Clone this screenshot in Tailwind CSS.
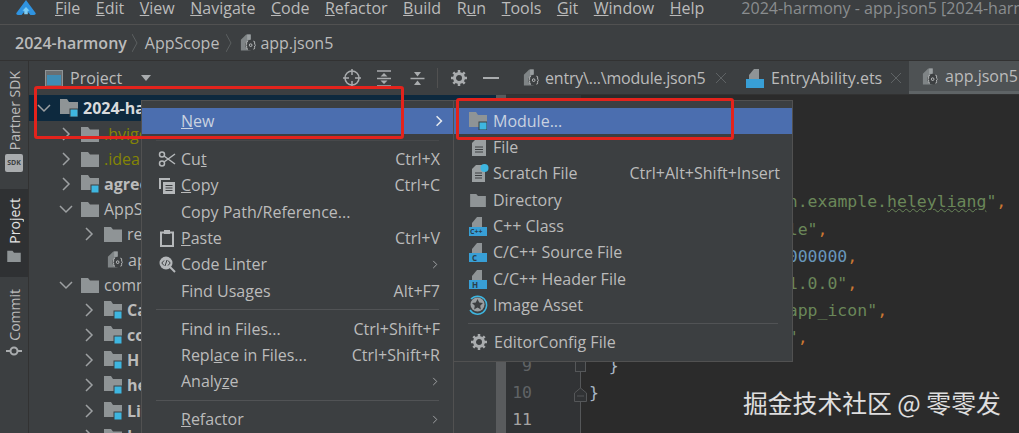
<!DOCTYPE html>
<html lang="en">
  <head>
    <meta charset="UTF-8" />
    <title>2024-harmony - app.json5</title>
    <script src="https://cdn.jsdelivr.net/npm/@tailwindcss/browser@4"></script>
  </head>
  <body class="bg-[#3c3f41]">
    <svg class="hidden">
      <symbol id="folder" viewBox="0 0 18 16"><path d="M0 1h7l2 2.500h9V16H0z" fill="#8f9496"/></symbol>
      <symbol id="module" viewBox="0 0 18 18"><path d="M0 0h7l2 3h9v12H0z" fill="#8f9496"/><rect x="10" y="10" width="8" height="8" fill="#3eb6e0" stroke="#3c3f41"/></symbol>
      <symbol id="json" viewBox="0 0 18 20"><path d="M1 7l6-6h5v18H1z" fill="#7f8486"/><path d="M8 1h4v6H8z" fill="#9a9fa1"/><circle cx="12" cy="13" r="6" fill="#3c3f41"/><path d="M9 8.500q-2 0-1.500 2t-1 2.500q1.500.5 1 2.500t1.500 2M15 8.500q2 0 1.500 2t1 2.500q-1.500.5-1 2.500t-1.500 2" fill="none" stroke="#c5c8c9" stroke-width="1"/><circle cx="12" cy="13" r="1.500" fill="none" stroke="#c5c8c9"/></symbol>
      <symbol id="typed" viewBox="0 0 18 20"><path d="M3 7l5-6h5v10H3z" fill="#8f9496"/><rect y="11" width="18" height="9" fill="#389fd6"/></symbol>
      <symbol id="chev-right" viewBox="0 0 10 14"><path d="M2 1l6 6-6 6" fill="none" stroke="#9da0a2" stroke-width="1.500"/></symbol>
      <symbol id="chev-down" viewBox="0 0 14 10"><path d="M1 2l6 6 6-6" fill="none" stroke="#9da0a2" stroke-width="1.500"/></symbol>
    </svg>

    <div class="relative w-[1019px] h-[433px] overflow-hidden bg-[#3c3f41] text-[#bbbbbb] text-[16px] font-['Open_Sans','Noto_Sans_CJK_SC',sans-serif]">
      <!-- Menu bar -->
      <header class="flex items-center h-[25px] border-b border-[#515151] whitespace-nowrap overflow-hidden leading-[16px]">
        <svg class="w-[22px] h-[16px] shrink-0 ml-[15px] mr-[18px] -mt-[8px]" viewBox="0 0 22 18">
          <path d="M11 0l11 15q0 2-2 2h-4l-5-6-5 6H2q-2 0-2-2z" fill="#2f93e0"/>
          <path d="M11 8l4 4h-2v4H9v-4H7z" fill="#7ccdf5"/>
        </svg>
        <nav class="flex shrink-0 gap-[15.500px] -mt-[8px]">
          <span><u>F</u>ile</span><span><u>E</u>dit</span><span><u>V</u>iew</span><span><u>N</u>avigate</span><span><u>C</u>ode</span><span><u>R</u>efactor</span><span><u>B</u>uild</span><span>R<u>u</u>n</span><span><u>T</u>ools</span><span><u>G</u>it</span><span><u>W</u>indow</span><span><u>H</u>elp</span>
        </nav>
        <span class="ml-[37px] shrink-0 -mt-[8px] text-[#8a8d8f]">2024-harmony - app.json5 [2024-harmony]</span>
      </header>

      <!-- Breadcrumb -->
      <div class="flex items-center h-[36px] pl-[15px] border-b border-[#323232] whitespace-nowrap">
        <b class="font-semibold">2024-harmony</b>
        <svg class="w-[6px] h-[18px] ml-[5px] mr-[7px]" viewBox="0 0 6 18"><path d="M0 0l5 9-5 9" fill="none" stroke="#5c5f61"/></svg>
        <span>AppScope</span>
        <svg class="w-[6px] h-[18px] ml-[7px] mr-[8px]" viewBox="0 0 6 18"><path d="M0 0l5 9-5 9" fill="none" stroke="#5c5f61"/></svg>
        <svg class="w-[16px] h-[19px] mr-[4px]"><use href="#json"/></svg>
        <span>app.json5</span>
      </div>

      <div class="flex h-[372px]">
        <!-- Tool window strip -->
        <aside class="w-[29px] shrink-0 border-r border-[#323232] flex flex-col items-center text-[14px]">
          <div class="flex flex-col items-center pt-[10px] h-[128px]">
            <span class="[writing-mode:vertical-rl] rotate-180">Partner SDK</span>
            <span class="mt-[4px] w-[18px] h-[18px] shrink-0 rounded-[2px] bg-[#a9acae] text-[#3c3f41] text-[7px] font-bold flex items-center justify-center">SDK</span>
          </div>
          <div class="w-full h-[88px] bg-[#2f3133] flex flex-col items-center pt-[9px] text-[#e4e4e4]">
            <span class="[writing-mode:vertical-rl] rotate-180">Project</span>
            <svg class="w-[14px] h-[12px] mt-[6px]"><use href="#folder"/></svg>
          </div>
          <div class="flex flex-col items-center pt-[12px]">
            <span class="[writing-mode:vertical-rl] rotate-180">Commit</span>
            <svg class="w-[16px] h-[12px] mt-[4px]" viewBox="0 0 16 12"><path d="M0 6h16" stroke="#a9acae" stroke-width="2"/><circle cx="8" cy="6" r="3.500" fill="#3c3f41" stroke="#a9acae" stroke-width="2"/></svg>
          </div>
        </aside>

        <!-- Project panel -->
        <section class="w-[477px] shrink-0 flex flex-col">
          <div class="flex items-center h-[34px] shrink-0 pl-[16px] pr-[7px]">
            <svg class="w-[18px] h-[17px]" viewBox="0 0 18 17"><rect x=".5" y=".5" width="17" height="16" fill="#6a6f72" stroke="#8f9496"/><rect x="2" y="5" width="14" height="10" fill="#3f8cb4"/></svg>
            <span class="ml-[7px]">Project</span>
            <svg class="w-[10px] h-[6px] ml-[19px]" viewBox="0 0 10 6"><path d="M0 0h10L5 6z" fill="#a9acae"/></svg>
            <div class="ml-auto flex items-center">
              <svg class="w-[18px] h-[18px]" viewBox="0 0 18 18"><circle cx="9" cy="9" r="7" fill="none" stroke="#a9acae" stroke-width="1.500"/><path d="M9 0v6M9 12v6M0 9h6M12 9h6" stroke="#a9acae" stroke-width="1.500"/></svg>
              <svg class="w-[16px] h-[17px] ml-[15px]" viewBox="0 0 16 17"><path d="M1 1h14M1 16h14M1 8.500h14" stroke="#a9acae" stroke-width="1.500"/><path d="M8 3l3.500 3.500h-7zM8 14l3.500-3.500h-7z" fill="#a9acae"/></svg>
              <svg class="w-[17px] h-[17px] ml-[17px]" viewBox="0 0 16 17"><path d="M1 8.500h14" stroke="#a9acae" stroke-width="1.500"/><path d="M8 6.500L4.500 2h7zM8 10.500l3.500 4.500h-7z" fill="#a9acae"/></svg>
              <span class="w-px h-[20px] ml-[11px] bg-[#515151]"></span>
              <svg class="w-[16px] h-[16px] ml-[13px]" viewBox="0 0 16 16"><circle cx="8" cy="8" r="4.500" fill="none" stroke="#a9acae" stroke-width="3"/><path d="M8 0v3M8 13v3M0 8h3M13 8h3M2.300 2.300l2.100 2.100M11.600 11.600l2.100 2.100M2.300 13.700l2.100-2.100M11.600 4.400l2.100-2.100" stroke="#a9acae" stroke-width="2.500"/></svg>
              <span class="w-[16px] h-[2px] ml-[16px] bg-[#a9acae]"></span>
            </div>
          </div>

          <div class="flex flex-1 min-h-0">
            <!-- Tree -->
            <div class="flex-1 min-w-0 overflow-hidden whitespace-nowrap">
              <div class="flex items-center h-[26px] bg-[#0d293e] pl-[8px] font-bold text-[#d8dadb]">
                <svg class="w-[14px] h-[10px]"><use href="#chev-down"/></svg>
                <svg class="w-[18px] h-[18px] ml-[9px]"><use href="#module"/></svg>
                <span class="ml-[5px]">2024-harmony</span>
              </div>
              <div class="flex items-center h-[25.200px] pl-[32px]"><svg class="w-[10px] h-[14px]"><use href="#chev-right"/></svg><svg class="w-[18px] h-[16px] ml-[10px]"><use href="#folder"/></svg><span class="ml-[5px] text-[#848504]">.hvigor</span></div>
              <div class="flex items-center h-[25.200px] pl-[32px]"><svg class="w-[10px] h-[14px]"><use href="#chev-right"/></svg><svg class="w-[18px] h-[16px] ml-[10px]"><use href="#folder"/></svg><span class="ml-[5px] text-[#848504]">.idea</span></div>
              <div class="flex items-center h-[25.200px] pl-[32px]"><svg class="w-[10px] h-[14px]"><use href="#chev-right"/></svg><svg class="w-[18px] h-[18px] ml-[10px]"><use href="#module"/></svg><b class="ml-[5px]">agree</b></div>
              <div class="flex items-center h-[25.200px] pl-[30px]"><svg class="w-[14px] h-[10px]"><use href="#chev-down"/></svg><svg class="w-[18px] h-[16px] ml-[8px]"><use href="#folder"/></svg><span class="ml-[5px]">AppScope</span></div>
              <div class="flex items-center h-[25.200px] pl-[55px]"><svg class="w-[10px] h-[14px]"><use href="#chev-right"/></svg><svg class="w-[18px] h-[16px] ml-[10px]"><use href="#folder"/></svg><span class="ml-[5px]">resources</span></div>
              <div class="flex items-center h-[25.200px] pl-[78px]"><svg class="w-[16px] h-[19px]"><use href="#json"/></svg><span class="ml-[5px]">app.json5</span></div>
              <div class="flex items-center h-[25.200px] pl-[30px]"><svg class="w-[14px] h-[10px]"><use href="#chev-down"/></svg><svg class="w-[18px] h-[16px] ml-[8px]"><use href="#folder"/></svg><span class="ml-[5px]">commons</span></div>
              <div class="flex items-center h-[25.200px] pl-[55px]"><svg class="w-[10px] h-[14px]"><use href="#chev-right"/></svg><svg class="w-[18px] h-[18px] ml-[10px]"><use href="#module"/></svg><b class="ml-[5px]">Ca</b></div>
              <div class="flex items-center h-[25.200px] pl-[55px]"><svg class="w-[10px] h-[14px]"><use href="#chev-right"/></svg><svg class="w-[18px] h-[18px] ml-[10px]"><use href="#module"/></svg><b class="ml-[5px]">co</b></div>
              <div class="flex items-center h-[25.200px] pl-[55px]"><svg class="w-[10px] h-[14px]"><use href="#chev-right"/></svg><svg class="w-[18px] h-[18px] ml-[10px]"><use href="#module"/></svg><b class="ml-[5px]">H</b></div>
              <div class="flex items-center h-[25.200px] pl-[55px]"><svg class="w-[10px] h-[14px]"><use href="#chev-right"/></svg><svg class="w-[18px] h-[18px] ml-[10px]"><use href="#module"/></svg><b class="ml-[5px]">he</b></div>
              <div class="flex items-center h-[25.200px] pl-[55px]"><svg class="w-[10px] h-[14px]"><use href="#chev-right"/></svg><svg class="w-[18px] h-[18px] ml-[10px]"><use href="#module"/></svg><b class="ml-[5px]">Li</b></div>
              <div class="flex items-center h-[25.200px] pl-[55px]"><svg class="w-[10px] h-[14px]"><use href="#chev-right"/></svg><svg class="w-[18px] h-[16px] ml-[10px]"><use href="#folder"/></svg><b class="ml-[5px]">Le</b></div>
            </div>
            <!-- Panel scrollbar -->
            <div class="w-[10px] shrink-0 bg-[#595b5d]"></div>
          </div>
        </section>

        <!-- Editor -->
        <main class="flex-1 min-w-0 flex flex-col">
          <div class="flex h-[34px] shrink-0 border-b border-[#323232] whitespace-nowrap overflow-hidden">
            <div class="flex items-center w-[232px] pl-[17px] shrink-0">
              <svg class="w-[16px] h-[19px]"><use href="#json"/></svg>
              <span class="ml-[6px] tracking-[-0.2px]">entry\...\module.json5</span>
              <svg class="w-[10px] h-[10px] ml-[10px]" viewBox="0 0 10 10"><path d="M0 0l10 10M10 0L0 10" stroke="#5f6365"/></svg>
            </div>
            <div class="flex items-center w-[171px] pl-[8px] shrink-0">
              <svg class="w-[18px] h-[20px]"><use href="#typed"/></svg>
              <span class="ml-[7px]">EntryAbility.ets</span>
              <svg class="w-[10px] h-[10px] ml-[9px]" viewBox="0 0 10 10"><path d="M0 0l10 10M10 0L0 10" stroke="#5f6365"/></svg>
            </div>
            <div class="flex items-center flex-1 pl-[13px] bg-[#4e5254] border-b-[3px] border-[#5f6466]">
              <svg class="w-[16px] h-[19px]"><use href="#json"/></svg>
              <span class="ml-[7px]">app.json5</span>
            </div>
          </div>
          <div class="flex-1 min-h-0 flex overflow-hidden bg-[#2b2b2b] font-['DejaVu_Sans_Mono',monospace] text-[16.500px] leading-[27.200px]">
            <div class="relative w-[75px] shrink-0 bg-[#313335] pt-[39px] pr-[49px] text-right text-[#606366]">
              <div>1</div>
              <div>2</div>
              <div>3</div>
              <div>4</div>
              <div>5</div>
              <div>6</div>
              <div>7</div>
              <div>8</div>
              <div>9</div>
              <div>10</div>
              <div class="text-[#a4a3a3]">11</div>
              <!-- Fold guide and markers -->
              <span class="absolute right-0 top-[277px] bottom-0 w-px bg-[#555759]"></span>
              <span class="absolute right-[-5px] top-[266px] w-[11px] h-[11px] border border-[#555759] bg-[#313335]"></span>
              <svg class="absolute right-[-6px] top-[292px] w-[13px] h-[15px]" viewBox="0 0 13 15"><path d="M.5 6l6-5 6 5v8.500H.5z" fill="#313335" stroke="#555759"/><path d="M3 9h7" stroke="#555759"/></svg>
            </div>
            <div class="pt-[39px] pl-[8px] text-[#a9b7c6] [&>div]:whitespace-pre">
              <div>{</div>
              <div>  <span class="text-[#9876aa]">"app"</span>: {</div>
              <div>    <span class="text-[#9876aa]">"bundleName"</span>: <span class="text-[#6a8759]">"cn.example.<span class="underline decoration-wavy decoration-[#6a8759] decoration-1">heleyliang</span>"</span><span class="text-[#cc7832]">,</span></div>
              <div>    <span class="text-[#9876aa]">"vendor"</span>: <span class="text-[#6a8759]">"example"</span><span class="text-[#cc7832]">,</span></div>
              <div>    <span class="text-[#9876aa]">"versionCode"</span>: <span class="text-[#6897bb]">1000000</span><span class="text-[#cc7832]">,</span></div>
              <div>    <span class="text-[#9876aa]">"versionName"</span>: <span class="text-[#6a8759]">"1.0.0"</span><span class="text-[#cc7832]">,</span></div>
              <div>    <span class="text-[#9876aa]">"icon"</span>: <span class="text-[#6a8759]">"$media:app_icon"</span><span class="text-[#cc7832]">,</span></div>
              <div>    <span class="text-[#9876aa]">"label"</span>: <span class="text-[#6a8759]">"helley"</span><span class="text-[#cc7832]">,</span></div>
              <div>  }</div>
              <div>}</div>
            </div>
          </div>
        </main>
      </div>

      <!-- New context menu -->
      <div class="absolute left-[141px] top-[100px] w-[313px] h-[340px] pt-[7px] bg-[#3c3f41] border border-[#515151] whitespace-nowrap">
        <div class="flex items-center h-[26px] pl-[39px] pr-[10px] bg-[#4b6eaf] text-[#c9d2e0]"><span><u>N</u>ew</span><svg class="w-[8px] h-[12px] ml-auto" viewBox="0 0 10 14"><path d="M2 1l6 6-6 6" fill="none" stroke="#e4e8ee" stroke-width="2"/></svg></div>
        <div class="h-[12px] flex items-center mx-[14px]"><span class="w-full h-px bg-[#47494b]"></span></div>
        <div class="flex items-center h-[26.300px] pr-[13px]">
          <svg class="w-[18px] h-[18px] ml-[16px] mr-[5px]" viewBox="0 0 18 18"><circle cx="4" cy="4.500" r="2.500" fill="none" stroke="#b5b8ba" stroke-width="1.500"/><circle cx="4" cy="13.500" r="2.500" fill="none" stroke="#b5b8ba" stroke-width="1.500"/><path d="M6 6l11 8M6 12L17 4" stroke="#b5b8ba" stroke-width="1.500"/></svg>
          <span>Cu<u>t</u></span><span class="ml-auto">Ctrl+X</span>
        </div>
        <div class="flex items-center h-[26.300px] pr-[13px]">
          <svg class="w-[17px] h-[17px] ml-[16px] mr-[6px]" viewBox="0 0 17 17"><path d="M1 1h11v2H3v9H1z" fill="#b5b8ba"/><rect x="5" y="5" width="12" height="12" fill="#b5b8ba"/><path d="M7.500 8.500h7M7.500 11h7M7.500 13.500h7" stroke="#3c3f41"/></svg>
          <span><u>C</u>opy</span><span class="ml-auto">Ctrl+C</span>
        </div>
        <div class="flex items-center h-[26.300px] pl-[39px]">Copy Path/Reference...</div>
        <div class="flex items-center h-[26.300px] pr-[13px]">
          <svg class="w-[14px] h-[17px] ml-[18px] mr-[7px]" viewBox="0 0 14 17"><rect x="1" y="2.500" width="12" height="13.500" fill="none" stroke="#b5b8ba" stroke-width="2"/><rect x="4" y="0" width="6" height="4" fill="#b5b8ba"/></svg>
          <span><u>P</u>aste</span><span class="ml-auto">Ctrl+V</span>
        </div>
        <div class="flex items-center h-[26.300px] pr-[15px]">
          <svg class="w-[17px] h-[17px] ml-[17px] mr-[5px]" viewBox="0 0 17 17"><circle cx="7" cy="7" r="6.500" fill="#b5b8ba"/><path d="M11 11l5 5" stroke="#b5b8ba" stroke-width="2"/><path d="M5 4.500L2.800 7 5 9.500M9 4.500L11.200 7 9 9.500M8 4L6 10" fill="none" stroke="#3c3f41"/></svg>
          <span>Code Linter</span><svg class="w-[6px] h-[11px] ml-auto" viewBox="0 0 10 14"><path d="M2 1l6 6-6 6" fill="none" stroke="#a9acae" stroke-width="1.500"/></svg>
        </div>
        <div class="flex items-center h-[26.300px] pl-[39px] pr-[13px]"><span>Find Usages</span><span class="ml-auto">Alt+F7</span></div>
        <div class="h-[11.700px] flex items-center mx-[14px]"><span class="w-full h-px bg-[#515355]"></span></div>
        <div class="flex items-center h-[26.300px] pl-[39px] pr-[13px]"><span>Find in Files...</span><span class="ml-auto">Ctrl+Shift+F</span></div>
        <div class="flex items-center h-[26.300px] pl-[39px] pr-[13px]"><span>Repl<u>a</u>ce in Files...</span><span class="ml-auto">Ctrl+Shift+R</span></div>
        <div class="flex items-center h-[26.300px] pl-[39px] pr-[15px]"><span>Analy<u>z</u>e</span><svg class="w-[6px] h-[11px] ml-auto" viewBox="0 0 10 14"><path d="M2 1l6 6-6 6" fill="none" stroke="#a9acae" stroke-width="1.500"/></svg></div>
        <div class="h-[11.700px] flex items-center mx-[14px]"><span class="w-full h-px bg-[#515355]"></span></div>
        <div class="flex items-center h-[26.300px] pl-[39px] pr-[15px]"><span><u>R</u>efactor</span><svg class="w-[6px] h-[11px] ml-auto" viewBox="0 0 10 14"><path d="M2 1l6 6-6 6" fill="none" stroke="#a9acae" stroke-width="1.500"/></svg></div>
      </div>

      <!-- New submenu -->
      <div class="absolute left-[453px] top-[100px] w-[340px] h-[262px] pt-[7px] bg-[#3c3f41] border border-[#515151] whitespace-nowrap">
        <div class="flex items-center h-[26px] pl-[15px] bg-[#4b6eaf] text-[#c9d2e0]"><svg class="w-[18px] h-[18px] mr-[6px]"><use href="#module"/></svg>Module...</div>
        <div class="flex items-center h-[26.300px] pl-[18px]">
          <svg class="w-[14px] h-[17px] mr-[7px]" viewBox="0 0 14 17"><path d="M0 4l4-4h10v17H0z" fill="#9a9fa1"/><path d="M3 8h8M3 10.500h8M3 13h8" stroke="#3c3f41"/></svg>File
        </div>
        <div class="flex items-center h-[26.300px] pl-[18px] pr-[12px]">
          <svg class="w-[17px] h-[18px] mr-[4px]" viewBox="0 0 17 18"><path d="M0 5l4-4h9v17H0z" fill="#9a9fa1"/><path d="M3 9h7M3 11.500h7M3 14h7" stroke="#3c3f41"/><circle cx="12.500" cy="4" r="4" fill="#3eb6e0"/></svg>
          <span>Scratch File</span><span class="ml-auto">Ctrl+Alt+Shift+Insert</span>
        </div>
        <div class="flex items-center h-[26.300px] pl-[15px]"><svg class="w-[18px] h-[14px] mr-[6px]"><use href="#folder"/></svg>Directory</div>
        <div class="flex items-center h-[26.300px] pl-[15px]">
          <span class="relative mr-[6px]"><svg class="block w-[18px] h-[20px]"><use href="#typed"/></svg><span class="absolute left-[1px] bottom-[0px] text-[7px] leading-[9px] font-bold text-[#2b3e4a]">C++</span></span>C++ Class
        </div>
        <div class="flex items-center h-[26.300px] pl-[15px]">
          <span class="relative mr-[6px]"><svg class="block w-[18px] h-[20px]"><use href="#typed"/></svg><span class="absolute left-[3px] bottom-[0px] text-[8px] leading-[9px] font-bold text-[#2b3e4a]">C</span></span>C/C++ Source File
        </div>
        <div class="flex items-center h-[26.300px] pl-[15px]">
          <span class="relative mr-[6px]"><svg class="block w-[18px] h-[20px]"><use href="#typed"/></svg><span class="absolute left-[3px] bottom-[0px] text-[8px] leading-[9px] font-bold text-[#2b3e4a]">H</span></span>C/C++ Header File
        </div>
        <div class="flex items-center h-[26.300px] pl-[13px]">
          <svg class="w-[21px] h-[21px] mr-[5px]" viewBox="0 0 21 21"><path d="M4 5a9 9 0 1 1-1 11" fill="none" stroke="#3eb6e0" stroke-width="1.500"/><circle cx="10.500" cy="10.500" r="7" fill="#9a9fa1"/><path d="M10.500 5l1.700 3.600 3.800.5-2.800 2.600.7 3.800-3.400-1.900-3.400 1.900.7-3.800L5 9.100l3.800-.5z" fill="#3c3f41"/></svg>
          Image Asset
        </div>
        <div class="h-[11px] flex items-center mx-[14px]"><span class="w-full h-px bg-[#515355]"></span></div>
        <div class="flex items-center h-[26.300px] pl-[17px]">
          <svg class="w-[16px] h-[16px] mr-[7px]" viewBox="0 0 16 16"><circle cx="8" cy="8" r="4.500" fill="none" stroke="#a9acae" stroke-width="3"/><path d="M8 0v3M8 13v3M0 8h3M13 8h3M2.300 2.300l2.100 2.100M11.600 11.600l2.100 2.100M2.300 13.700l2.100-2.100M11.600 4.400l2.100-2.100" stroke="#a9acae" stroke-width="2.500"/></svg>
          EditorConfig File
        </div>
      </div>

      <!-- Red annotation boxes -->
      <div class="absolute left-[34px] top-[86px] w-[370px] h-[53px] border-[3px] border-[#e3231c] rounded-[3px]"></div>
      <div class="absolute left-[456px] top-[98px] w-[278px] h-[42px] border-[3px] border-[#e3231c] rounded-[3px]"></div>

      <!-- Watermark -->
      <span class="absolute left-[743px] top-[385px] text-[24.800px] leading-[34px] whitespace-nowrap text-white/85 font-['Noto_Sans_CJK_SC',sans-serif]">掘金技术社区 @ 零零发</span>
    </div>
  </body>
</html>
